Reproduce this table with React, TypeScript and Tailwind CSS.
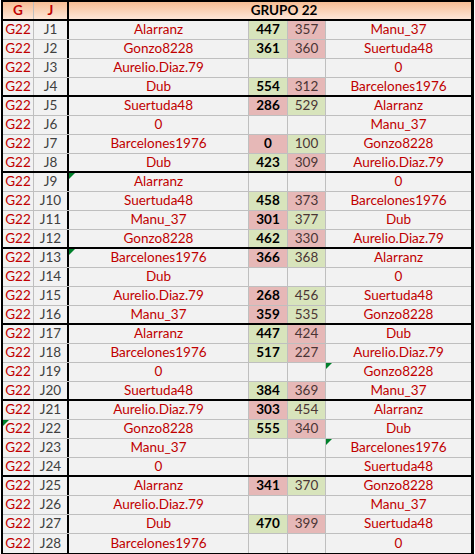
type Match = {
  j: string;
  home: string;
  a: number | null;
  b: number | null;
  away: string;
  mark?: "g" | "home" | "away";
};

const matches: Match[] = [
  { j: "J1", home: "Alarranz", a: 447, b: 357, away: "Manu_37" },
  { j: "J2", home: "Gonzo8228", a: 361, b: 360, away: "Suertuda48" },
  { j: "J3", home: "Aurelio.Diaz.79", a: null, b: null, away: "0" },
  { j: "J4", home: "Dub", a: 554, b: 312, away: "Barcelones1976" },
  { j: "J5", home: "Suertuda48", a: 286, b: 529, away: "Alarranz" },
  { j: "J6", home: "0", a: null, b: null, away: "Manu_37" },
  { j: "J7", home: "Barcelones1976", a: 0, b: 100, away: "Gonzo8228" },
  { j: "J8", home: "Dub", a: 423, b: 309, away: "Aurelio.Diaz.79" },
  { j: "J9", home: "Alarranz", a: null, b: null, away: "0", mark: "home" },
  { j: "J10", home: "Suertuda48", a: 458, b: 373, away: "Barcelones1976" },
  { j: "J11", home: "Manu_37", a: 301, b: 377, away: "Dub" },
  { j: "J12", home: "Gonzo8228", a: 462, b: 330, away: "Aurelio.Diaz.79" },
  { j: "J13", home: "Barcelones1976", a: 366, b: 368, away: "Alarranz", mark: "home" },
  { j: "J14", home: "Dub", a: null, b: null, away: "0" },
  { j: "J15", home: "Aurelio.Diaz.79", a: 268, b: 456, away: "Suertuda48" },
  { j: "J16", home: "Manu_37", a: 359, b: 535, away: "Gonzo8228" },
  { j: "J17", home: "Alarranz", a: 447, b: 424, away: "Dub" },
  { j: "J18", home: "Barcelones1976", a: 517, b: 227, away: "Aurelio.Diaz.79" },
  { j: "J19", home: "0", a: null, b: null, away: "Gonzo8228", mark: "away" },
  { j: "J20", home: "Suertuda48", a: 384, b: 369, away: "Manu_37" },
  { j: "J21", home: "Aurelio.Diaz.79", a: 303, b: 454, away: "Alarranz" },
  { j: "J22", home: "Gonzo8228", a: 555, b: 340, away: "Dub", mark: "g" },
  { j: "J23", home: "Manu_37", a: null, b: null, away: "Barcelones1976", mark: "away" },
  { j: "J24", home: "0", a: null, b: null, away: "Suertuda48" },
  { j: "J25", home: "Alarranz", a: 341, b: 370, away: "Gonzo8228" },
  { j: "J26", home: "Aurelio.Diaz.79", a: null, b: null, away: "Manu_37" },
  { j: "J27", home: "Dub", a: 470, b: 399, away: "Suertuda48" },
  { j: "J28", home: "Barcelones1976", a: null, b: null, away: "0" },
];

function Flag() {
  return (
    <svg className="absolute left-0 top-0" width="6" height="6" viewBox="0 0 6 6">
      <path d="M0 0H6L0 6Z" fill="#00802b" />
    </svg>
  );
}

function scoreBg(mine: number | null, other: number | null) {
  if (mine === null || other === null) return "bg-[#f2f2f2]";
  return mine > other ? "bg-[#d8e4bc]" : "bg-[#e6b8b7]";
}

function Row({ m, last, groupEnd }: { m: Match; last: boolean; groupEnd: boolean }) {
  const line = last
    ? ""
    : groupEnd
      ? "border-b-2 border-black"
      : "border-b border-[#bfbfbf]";
  return (
    <div className={`flex h-[19px] bg-[#f2f2f2] ${line}`}>
      <div className="relative flex w-[31px] items-center justify-center border-r border-[#bfbfbf] text-[#c00000]">
        {m.mark === "g" && <Flag />}
        G22
      </div>
      <div className="flex w-[35px] items-center justify-center border-r-2 border-black text-[#404040]">
        {m.j}
      </div>
      <div className="relative flex w-[180px] items-center justify-center border-r border-[#bfbfbf] text-[#c00000]">
        {m.mark === "home" && <Flag />}
        {m.home}
      </div>
      <div
        className={`flex w-[39px] items-center justify-center border-r border-[#bfbfbf] font-bold text-black ${scoreBg(m.a, m.b)}`}
      >
        {m.a ?? ""}
      </div>
      <div
        className={`flex w-[38px] items-center justify-center border-r border-[#bfbfbf] text-[#4a3434] ${scoreBg(m.b, m.a)}`}
      >
        {m.b ?? ""}
      </div>
      <div className="relative flex flex-1 items-center justify-center text-[#c00000]">
        {m.mark === "away" && <Flag />}
        {m.away}
      </div>
    </div>
  );
}

export default function App() {
  return (
    <div className="h-[554px] w-[475px] bg-white">
      <div
        className="ml-px flex w-[473px] flex-col border-2 border-r-[3px] border-b-[3px] border-black text-[13.5px] leading-none"
        style={{ fontFamily: "Lato, 'Liberation Sans', sans-serif" }}
      >
        <div className="flex h-[19px] border-b-2 border-black bg-gradient-to-b from-[#f6bd94] to-[#fde7d8] font-bold">
          <div className="flex w-[31px] items-center justify-center border-r border-[#bfbfbf] text-[#c00000]">
            G
          </div>
          <div className="flex w-[35px] items-center justify-center border-r-2 border-black text-[#c00000]">
            J
          </div>
          <div className="flex flex-1 items-center justify-center pl-[28px] text-black">
            GRUPO 22
          </div>
        </div>
        {matches.map((m, i) => (
          <Row
            key={m.j}
            m={m}
            last={i === matches.length - 1}
            groupEnd={i % 4 === 3}
          />
        ))}
      </div>
    </div>
  );
}
